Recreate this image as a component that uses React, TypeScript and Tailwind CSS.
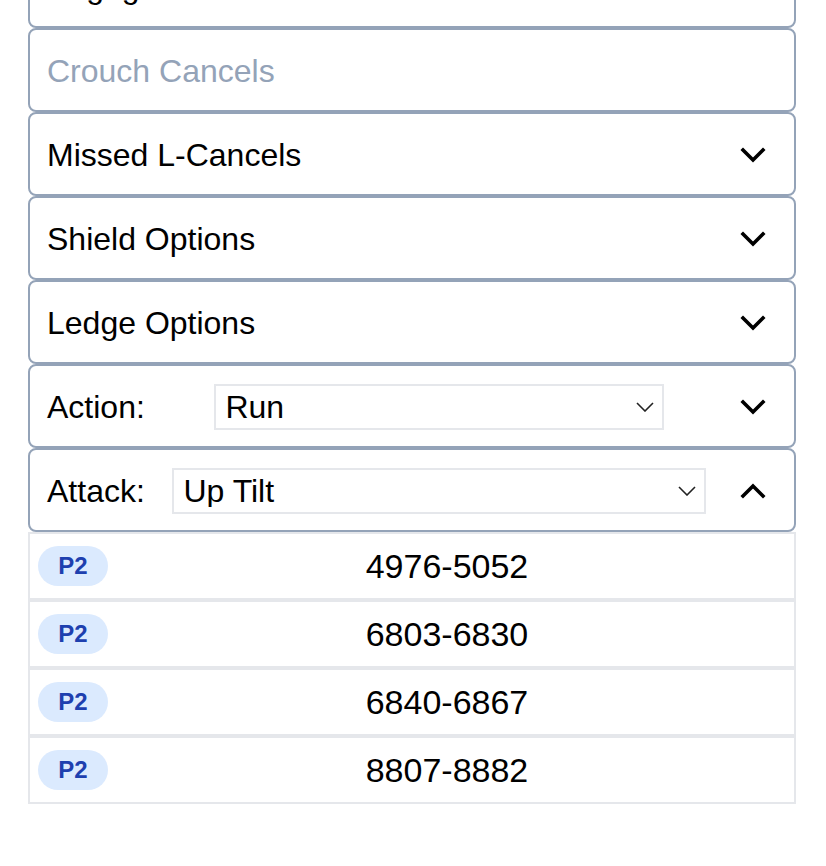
import React from "react";

const font = { fontFamily: '"Liberation Sans", Arial, sans-serif' };

function BigChevron({ up = false }: { up?: boolean }) {
  return (
    <svg width="26" height="16" viewBox="0 0 26 16" className="shrink-0">
      <path
        d={up ? "M3 13 L13 3 L23 13" : "M3 3 L13 13 L23 3"}
        fill="none"
        stroke="#000"
        strokeWidth="3.6"
        strokeLinecap="square"
        strokeLinejoin="miter"
      />
    </svg>
  );
}

function SmallChevron() {
  return (
    <svg width="18" height="10" viewBox="0 0 18 10" className="pointer-events-none absolute right-[8px] top-1/2 -translate-y-1/2">
      <path d="M1 1 L9 9 L17 1" fill="none" stroke="#222" strokeWidth="1.6" />
    </svg>
  );
}

function Card({ children }: { children: React.ReactNode }) {
  return (
    <div className="flex h-[84px] items-center rounded-[8px] border-2 border-[#94a3b8] bg-white pl-[17px] pr-[28px] pt-[2px]">
      {children}
    </div>
  );
}

function SelectBox({ value, width }: { value: string; width: string }) {
  return (
    <div className={`relative h-[46px] ${width} border-2 border-[#e5e7eb] bg-white`}>
      <select
        defaultValue={value}
        className="h-full w-full appearance-none bg-transparent pl-[9px] text-[32px] leading-none text-black outline-none"
      >
        <option>{value}</option>
      </select>
      <SmallChevron />
    </div>
  );
}

const rows = ["4976-5052", "6803-6830", "6840-6867", "8807-8882"];

export default function App() {
  return (
    <div className="min-h-[866px] bg-white" style={font}>
      <div className="ml-[28px] -mt-[56px] w-[768px]">
        <Card>
          <span className="flex-1 text-[32px] text-black">Edgeguards</span>
          <BigChevron />
        </Card>
        <Card>
          <span className="flex-1 text-[32px] text-[#94a3b8]">Crouch Cancels</span>
        </Card>
        <Card>
          <span className="flex-1 text-[32px] text-black">Missed L-Cancels</span>
          <BigChevron />
        </Card>
        <Card>
          <span className="flex-1 text-[32px] text-black">Shield Options</span>
          <BigChevron />
        </Card>
        <Card>
          <span className="flex-1 text-[32px] text-black">Ledge Options</span>
          <BigChevron />
        </Card>
        <Card>
          <span className="text-[32px] text-black">Action:</span>
          <div className="flex flex-1 justify-center pl-[6px] pr-[12px]">
            <SelectBox value="Run" width="w-[450px]" />
          </div>
          <BigChevron />
        </Card>
        <Card>
          <span className="text-[32px] text-black">Attack:</span>
          <div className="flex flex-1 justify-center pl-[6px] pr-[12px]">
            <SelectBox value="Up Tilt" width="w-[534px]" />
          </div>
          <BigChevron up />
        </Card>
        <div>
          {rows.map((r) => (
            <div key={r} className="flex h-[68px] items-center border-2 border-[#e5e7eb] bg-white px-[8px]">
              <span className="flex h-[40px] w-[70px] items-center justify-center rounded-full bg-[#dbeafe] text-[24px] font-semibold text-[#1e40af]">
                P2
              </span>
              <span className="flex-1 text-center text-[34px] text-black">{r}</span>
            </div>
          ))}
        </div>
      </div>
    </div>
  );
}
